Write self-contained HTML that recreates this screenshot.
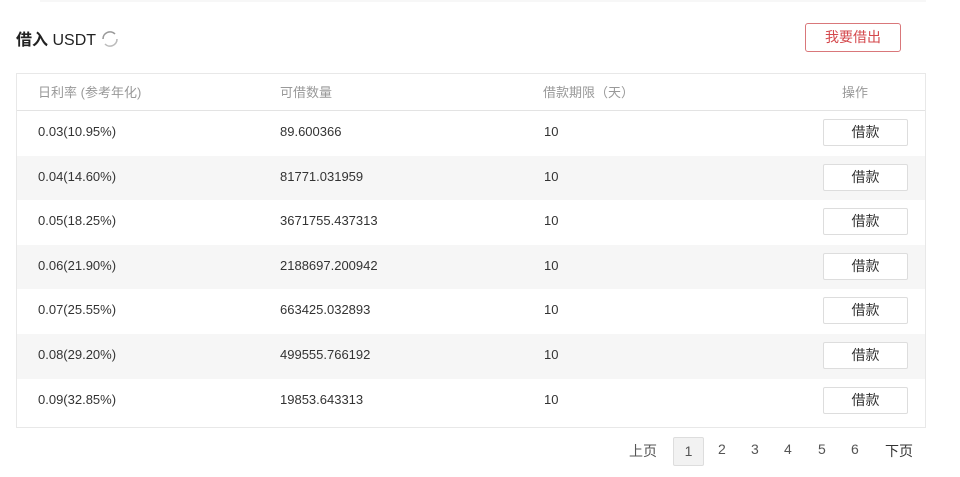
<!DOCTYPE html>
<html><head><meta charset="utf-8"><style>
body{margin:0;width:960px;height:477px;background:#fff;font-family:"Liberation Sans","Noto Sans CJK SC",sans-serif;position:relative;overflow:hidden;color:#333}
.abs{position:absolute}
.title{left:16px;top:26px;font-size:16px;color:#222}
.title b{font-weight:bold}
.out{left:805px;top:23px;width:94px;height:27px;border:1px solid #d9777a;border-radius:3px;color:#d4484c;font-size:14px;text-align:center;line-height:27px}
.tbl{left:16px;top:73px;width:908px;height:353px;border:1px solid #e8e8e8}
.row{position:absolute;left:0;width:908px;height:44.6px;font-size:13px;line-height:42px}
.row span{position:absolute}
.hd{color:#999;height:36px;line-height:37px;border-bottom:1px solid #e3e3e3;top:0}
.g{background:#f6f6f6}
.btn{position:absolute;left:806px;top:8px;width:83px;height:25px;border:1px solid #ddd;border-radius:2px;background:#fff;text-align:center;line-height:25px;font-size:14px;color:#333}
.pg{top:441px;font-size:14px;color:#555}
</style></head><body>
<div class="abs" style="left:40px;top:0;width:886px;height:2px;background:#f7f7f7"></div>
<div class="abs title"><b>借入</b> USDT
<svg width="20" height="20" viewBox="0 0 20 20" style="vertical-align:-4px"><path d="M3 10a7 7 0 0 1 12-5" fill="none" stroke="#999" stroke-width="1.6"/><path d="M17 10a7 7 0 0 1-12 5" fill="none" stroke="#bbb" stroke-width="1.6"/></svg></div>
<div class="abs out">我要借出</div>
<div class="abs tbl">
<div class="row hd"><span style="left:21px">日利率 (参考年化)</span><span style="left:263px">可借数量</span><span style="left:526px">借款期限（天）</span><span style="left:825px">操作</span></div>
<div class="row" style="top:37px"><span style="left:21px">0.03(10.95%)</span><span style="left:263px">89.600366</span><span style="left:527px">10</span><div class="btn">借款</div></div>
<div class="row g" style="top:81.6px"><span style="left:21px">0.04(14.60%)</span><span style="left:263px">81771.031959</span><span style="left:527px">10</span><div class="btn">借款</div></div>
<div class="row" style="top:126.2px"><span style="left:21px">0.05(18.25%)</span><span style="left:263px">3671755.437313</span><span style="left:527px">10</span><div class="btn">借款</div></div>
<div class="row g" style="top:170.8px"><span style="left:21px">0.06(21.90%)</span><span style="left:263px">2188697.200942</span><span style="left:527px">10</span><div class="btn">借款</div></div>
<div class="row" style="top:215.4px"><span style="left:21px">0.07(25.55%)</span><span style="left:263px">663425.032893</span><span style="left:527px">10</span><div class="btn">借款</div></div>
<div class="row g" style="top:260px"><span style="left:21px">0.08(29.20%)</span><span style="left:263px">499555.766192</span><span style="left:527px">10</span><div class="btn">借款</div></div>
<div class="row" style="top:304.6px"><span style="left:21px">0.09(32.85%)</span><span style="left:263px">19853.643313</span><span style="left:527px">10</span><div class="btn">借款</div></div>
</div>
<div class="abs pg" style="left:629px">上页</div>
<div class="abs" style="left:673px;top:437px;width:29px;height:27px;border:1px solid #ddd;background:#f2f2f2;border-radius:2px;text-align:center;line-height:27px;font-size:14px;color:#555">1</div>
<div class="abs pg" style="left:718px">2</div>
<div class="abs pg" style="left:751px">3</div>
<div class="abs pg" style="left:784px">4</div>
<div class="abs pg" style="left:818px">5</div>
<div class="abs pg" style="left:851px">6</div>
<div class="abs pg" style="left:885px;color:#333">下页</div>
</body></html>
